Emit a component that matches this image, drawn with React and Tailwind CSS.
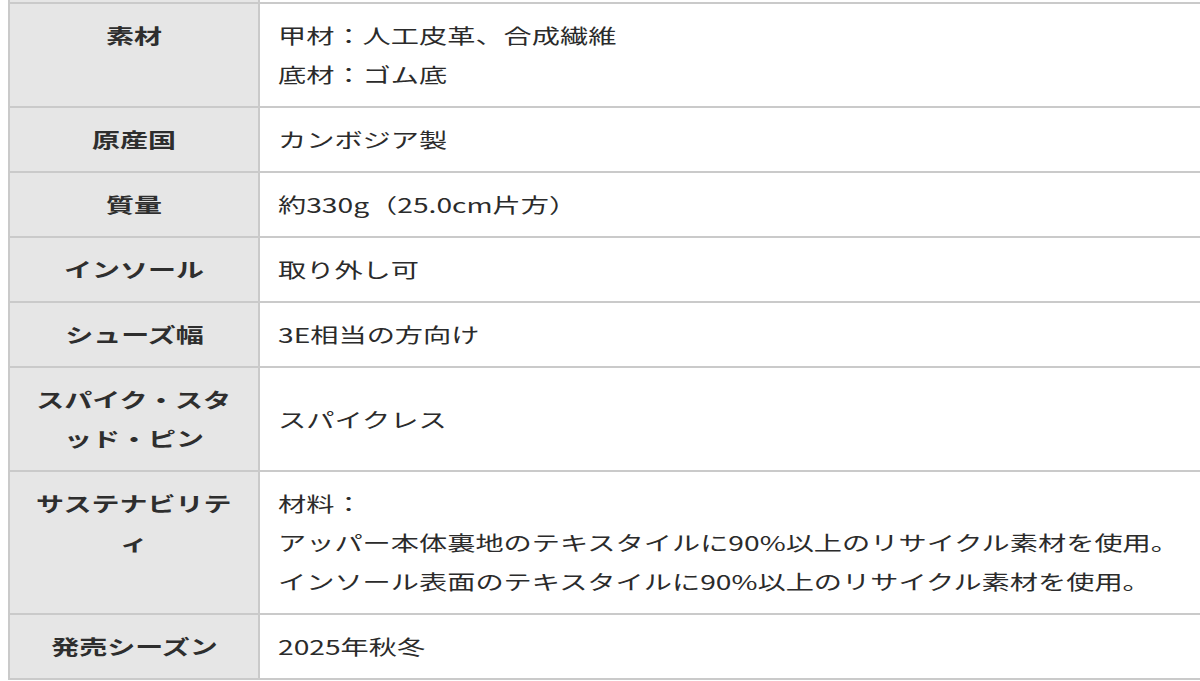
const specs = [
    { label: ['素材'], value: ['甲材：人工皮革、合成繊維', '底材：ゴム底'] },
    { label: ['原産国'], value: ['カンボジア製'] },
    { label: ['質量'], value: ['約330g（25.0cm片方）'] },
    { label: ['インソール'], value: ['取り外し可'] },
    { label: ['シューズ幅'], value: ['3E相当の方向け'] },
    { label: ['スパイク・スタ', 'ッド・ピン'], value: ['スパイクレス'] },
    { label: ['サステナビリテ', 'ィ'], value: ['材料：', 'アッパー本体裏地のテキスタイルに90%以上のリサイクル素材を使用。', 'インソール表面のテキスタイルに90%以上のリサイクル素材を使用。'] },
    { label: ['発売シーズン'], value: ['2025年秋冬'] },
];

// the source page is shown stretched sideways, so each line is widened
function SpecRow({ spec }) {
    return (
        <div className="flex border-b-2 border-[#cacaca]">
            <div className="w-[250px] shrink-0 bg-[#e6e6e6] border-r-2 border-[#cacaca] px-[14px] py-[12px] text-center font-bold text-[#2e2e2e]">
                {spec.label.map((l, i) => (
                    <div key={i}>
                        <span className="inline-block whitespace-nowrap scale-x-[1.4]">{l}</span>
                    </div>
                ))}
            </div>
            <div className="flex-1 flex flex-col justify-center px-[18px] py-[12px] text-[#2b2b2b]">
                {spec.value.map((v, i) => (
                    <div key={i}>
                        <span className="inline-block whitespace-nowrap origin-left scale-x-[1.41]">{v}</span>
                    </div>
                ))}
            </div>
        </div>
    );
}

export default function App() {
    return (
        <div className="w-[1200px] h-[681px] overflow-hidden bg-white">
            <div
                className="ml-2 w-[1240px] border-l-2 border-[#cacaca] text-[20px] leading-[39px]"
                style={{ fontFamily: '"Noto Sans CJK JP", "Noto Sans", sans-serif' }}
            >
                {/* bottom sliver of the row above */}
                <div className="flex h-[2px] border-b-2 border-[#cacaca] box-content">
                    <div className="w-[250px] shrink-0 bg-[#e6e6e6] border-r-2 border-[#cacaca]"></div>
                    <div className="flex-1"></div>
                </div>
                {specs.map((spec, i) => <SpecRow key={i} spec={spec} />)}
            </div>
        </div>
    );
}
